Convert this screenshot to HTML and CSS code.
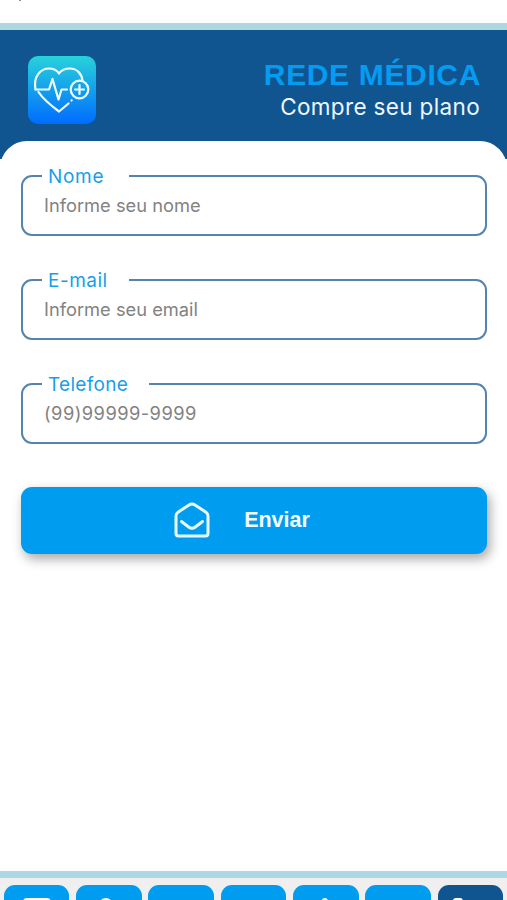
FILE: index.html
```html
<!DOCTYPE html>
<html lang="pt-BR">
<head>
    <meta charset="UTF-8">
    <meta name="viewport" content="width=device-width, initial-scale=1.0">
    <title>Rede Médica</title>
    <link rel="stylesheet" href="styles.css">
</head>
<body>
    <div class="top-strip"><span class="mark"></span></div>

    <header class="header">
        <svg class="logo" viewBox="0 0 68 68">
            <defs>
                <linearGradient id="logoBg" x1="0" y1="0" x2="0" y2="1">
                    <stop offset="0" stop-color="#28d2db"/>
                    <stop offset="1" stop-color="#006cff"/>
                </linearGradient>
            </defs>
            <rect width="68" height="68" rx="10" fill="url(#logoBg)"/>
            <g fill="none" stroke="#f1fdff" stroke-width="2.2" stroke-linecap="round" stroke-linejoin="round">
                <path d="M7.5 33.5H21L24.5 23L30.5 43.5L33.5 33.5H39"/>
                <path d="M7.5 33.5C5 20 13 12.5 21 12.5C26 12.5 29 14.5 31 17.5C33 14.5 37 12.5 42 12.5C49 12.5 54 18 54.5 25"/>
                <path d="M10.5 36C15 43 23 49.5 31 55.5L40.5 47.5M43.5 44.5L43.6 44.4"/>
                <circle cx="51.5" cy="33.5" r="8.8"/>
                <path d="M51.5 29V38M47 33.5H56"/>
            </g>
        </svg>
        <div class="titles">
            <h1>REDE MÉDICA</h1>
            <p>Compre seu plano</p>
        </div>
    </header>

    <main class="content">
        <form onsubmit="return false">
            <fieldset>
                <legend class="legend-name">Nome</legend>
                <input type="text" placeholder="Informe seu nome">
            </fieldset>
            <fieldset>
                <legend class="legend-email">E-mail</legend>
                <input type="email" placeholder="Informe seu email">
            </fieldset>
            <fieldset>
                <legend class="legend-phone">Telefone</legend>
                <input class="input-phone" type="tel" placeholder="(99)99999-9999">
            </fieldset>
            <button class="send" type="submit">
                <svg viewBox="0 0 36 36">
                    <path d="M2 14Q2 11.5 4 10.2L15 2.9Q18 1 21 2.9L32 10.2Q34 11.5 34 14V31.5Q34 34 31.5 34H4.5Q2 34 2 31.5Z"/>
                    <path d="M7.5 19.5L15 25.2Q18 27.3 21 25.2L28.5 19.5"/>
                </svg>
                <span>Enviar</span>
            </button>
        </form>
    </main>

    <nav class="tabs">
        <a class="tab"><svg viewBox="0 0 66 66"><rect x="19" y="13" width="28" height="24" rx="4"/></svg></a>
        <a class="tab"><svg viewBox="0 0 66 66"><circle cx="30" cy="20" r="7"/></svg></a>
        <a class="tab"></a>
        <a class="tab"></a>
        <a class="tab"><svg viewBox="0 0 66 66"><circle cx="32" cy="16" r="3"/></svg></a>
        <a class="tab"></a>
        <a class="tab active"><svg viewBox="0 0 66 66"><path d="M15 16Q15 13 18 13H22Q25 13 25 16V28H15Z"/></svg></a>
    </nav>
</body>
</html>
```

FILE: styles.css
```css
* {
    box-sizing: border-box;
}
body {
    margin: 0;
    height: 900px;
    display: flex;
    flex-direction: column;
    overflow: hidden;
    background: white;
    font-family: Inter, sans-serif;
}
.top-strip {
    height: 30px;
    flex: none;
    border-bottom: 7px solid #add8e3;
}
.mark {
    display: block;
    width: 2px;
    height: 1px;
    margin-left: 19px;
    background: #87949e;
}
.header {
    height: 129px;
    flex: none;
    display: flex;
    justify-content: space-between;
    align-items: flex-start;
    padding: 26px 27px 0 28px;
    background: #10558f;
}
.logo {
    width: 68px;
    height: 68px;
}
.titles {
    padding-top: 3px;
    text-align: right;
}
h1 {
    margin: 0;
    font: bold 30px/32px "Liberation Sans", sans-serif;
    letter-spacing: 0.65px;
    margin-right: -1px;
    color: #049cf2;
}
.titles p {
    margin: 0;
    font-size: 22.5px;
    line-height: 32px;
    letter-spacing: 0.35px;
    color: #edf7ff;
}
.content {
    flex: 1;
    margin-top: -18px;
    padding: 23px 20px 0 21px;
    border-radius: 27px 27px 0 0;
    background: white;
}
fieldset {
    height: 71.5px;
    margin: 0 0 32.5px;
    padding: 0 21px;
    border: 2px solid #5584af;
    border-radius: 11px;
    min-width: 0;
}
legend {
    min-width: 87px;
    height: 24px;
    margin-left: -2px;
    padding: 0 21px 0 6px;
    font-size: 19px;
    line-height: 25px;
    color: #159feb;
}
.legend-name {
    letter-spacing: 0.7px;
}
.legend-email {
    letter-spacing: 0.5px;
}
.legend-phone {
    letter-spacing: 0.3px;
}
input {
    display: block;
    width: 100%;
    height: 26px;
    margin-top: 4px;
    padding: 0;
    border: none;
    outline: none;
    background: none;
    font: 18.3px/26px Inter, sans-serif;
    color: #333;
}
input::placeholder {
    color: #828282;
}
.input-phone {
    letter-spacing: 0.45px;
}
.send {
    width: 100%;
    height: 67px;
    margin-top: 43px;
    padding: 0 24px 0 0;
    display: flex;
    justify-content: center;
    align-items: center;
    gap: 34px;
    border: none;
    border-radius: 11px;
    background: #009cf0;
    box-shadow: 3px 5px 12px rgba(0, 0, 0, 0.35);
    color: #f3fcff;
    font: bold 21.5px "Liberation Sans", sans-serif;
    cursor: pointer;
}
.send svg {
    width: 36px;
    height: 36px;
    fill: none;
    stroke: #e9fbff;
    stroke-width: 3;
    stroke-linecap: round;
    stroke-linejoin: round;
}
.tabs {
    height: 29px;
    flex: none;
    display: flex;
    gap: 6.6px;
    padding: 6.5px 3.7px 0;
    border-top: 7px solid #add8e3;
    background: #efefef;
    overflow: hidden;
}
.tab {
    flex: 1;
    height: 66px;
    border-radius: 11px;
    background: #009cf0;
}
.tab svg {
    display: block;
    fill: #fff;
}
.tab.active {
    background: #10558f;
}
```
